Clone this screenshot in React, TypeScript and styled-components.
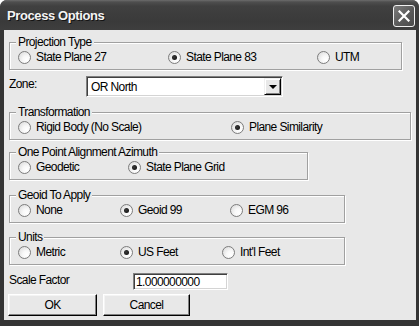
import React from 'react';
import styled, { createGlobalStyle } from 'styled-components';

const Global = createGlobalStyle`
  html, body { margin: 0; padding: 0; background: #ffffff; }
  body { font-family: 'Liberation Sans', Arial, sans-serif; }
  * { box-sizing: border-box; }
`;

const Window = styled.div`
  width: 419px;
  height: 326px;
  display: flex;
  flex-direction: column;
  background: #343434;
  border-radius: 7px 7px 0 0;
  overflow: hidden;
`;

const TitleBar = styled.div`
  height: 30px;
  flex: none;
  display: flex;
  align-items: center;
  justify-content: space-between;
  padding: 1px 4px 0 7px;
  background: linear-gradient(#6c6c6c 0, #4e4e4e 2px, #404040 6px, #3a3a3a 22px, #3e3e3e 100%);
`;

const Title = styled.span`
  color: #f4f4f4;
  font-weight: bold;
  font-size: 13px;
  letter-spacing: -0.4px;
  text-shadow: 1px 1px 0 #141414;
`;

const CloseButton = styled.button`
  width: 22px;
  height: 22px;
  padding: 0;
  border: 1px solid #f0f0f0;
  border-radius: 3px;
  background: linear-gradient(135deg, #7c7c7c, #5a5a5a 55%, #4a4a4a);
  display: flex;
  align-items: center;
  justify-content: center;
`;

const Client = styled.div`
  flex: 1;
  margin: 0 3px 6px 4px;
  background: #e8e8e8;
  padding: 6px 0 0 5px;
  display: flex;
  flex-direction: column;
  align-items: flex-start;
  font-size: 12px;
  letter-spacing: -0.6px;
  color: #000;
`;

const Group = styled.fieldset<{ $w: number; $mt?: number }>`
  width: ${(p) => p.$w}px;
  min-width: 0;
  margin: ${(p) => p.$mt ?? 0}px 0 0 0;
  padding: 0 0 4px 8px;
  border: 1px solid #a0a0a0;
  box-shadow: 1px 1px 0 #ffffff, inset 1px 1px 0 #ffffff;
`;

const Legend = styled.legend`
  padding: 0 2px;
  margin-left: -2px;
  line-height: 13px;
  font-size: 12px;
  background: #e8e8e8;
`;

const Options = styled.div<{ $cols: string }>`
  display: grid;
  grid-template-columns: ${(p) => p.$cols};
  height: 16px;
  align-items: center;
`;

const RadioLabel = styled.label`
  display: flex;
  align-items: center;
  gap: 5px;
  white-space: nowrap;
  line-height: 16px;
`;

const RadioMark = styled.span<{ $checked?: boolean }>`
  width: 13px;
  height: 13px;
  flex: none;
  border-radius: 50%;
  border: 1px solid #7c7c7c;
  background: radial-gradient(circle at 70% 70%, #ffffff 0%, #f8f8f8 35%, #d6d6d6 100%);
  display: flex;
  align-items: center;
  justify-content: center;
  &::after {
    content: '';
    width: 5px;
    height: 5px;
    border-radius: 50%;
    background: ${(p) => (p.$checked ? 'radial-gradient(circle at 40% 40%, #3a3a3a, #0a0a0a)' : 'transparent')};
  }
`;

const FieldRow = styled.div<{ $mt: number }>`
  display: flex;
  align-items: center;
  margin-top: ${(p) => p.$mt}px;
`;

const FieldLabel = styled.span<{ $w: number; $dy?: number }>`
  width: ${(p) => p.$w}px;
  position: relative;
  top: ${(p) => p.$dy ?? 0}px;
`;

const Combo = styled.div`
  width: 197px;
  height: 21px;
  display: flex;
  align-items: center;
  background: #fff;
  border-style: solid;
  border-width: 1px;
  border-color: #808080 #ffffff #ffffff #808080;
  box-shadow: inset 1px 1px 0 #404040, inset -1px -1px 0 #d4d4d4;
  padding: 1px 1px 1px 4px;
`;

const ComboText = styled.span`
  flex: 1;
`;

const DropButton = styled.span`
  width: 17px;
  height: 17px;
  background: #e8e8e8;
  border-style: solid;
  border-width: 1px;
  border-color: #f0f0f0 #000 #000 #f0f0f0;
  box-shadow: inset 1px 1px 0 #fff, inset -1px -1px 0 #808080;
  display: flex;
  align-items: center;
  justify-content: center;
  &::after {
    content: '';
    width: 0;
    height: 0;
    border-left: 4px solid transparent;
    border-right: 4px solid transparent;
    border-top: 4px solid #000;
  }
`;

const TextInput = styled.input`
  width: 95px;
  height: 17px;
  border-style: solid;
  border-width: 1px;
  border-color: #808080 #ffffff #ffffff #808080;
  box-shadow: inset 1px 1px 0 #404040, inset -1px -1px 0 #d4d4d4;
  padding: 0 0 0 2px;
  font: inherit;
  letter-spacing: inherit;
  background: #fff;
  color: #000;
  outline: none;
`;

const ButtonRow = styled.div`
  display: flex;
  gap: 6px;
  margin: 4px 0 0 -1px;
`;

const PushButton = styled.button<{ $w: number }>`
  width: ${(p) => p.$w}px;
  height: 22px;
  padding: 0;
  background: #e8e8e8;
  font: inherit;
  letter-spacing: inherit;
  color: #000;
  border-style: solid;
  border-width: 1px;
  border-color: #fff #000 #000 #fff;
  box-shadow: inset -1px -1px 0 #808080, inset 1px 1px 0 #f4f4f4;
`;

type Opt = { label: string; checked?: boolean };

const Radio = ({ label, checked }: Opt) => (
  <RadioLabel>
    <RadioMark $checked={checked} />
    {label}
  </RadioLabel>
);

const groups: { title: string; w: number; mt: number; cols: string; opts: Opt[] }[] = [
  {
    title: 'Transformation',
    w: 402,
    mt: 9,
    cols: '213px auto',
    opts: [{ label: 'Rigid Body (No Scale)' }, { label: 'Plane Similarity', checked: true }],
  },
  {
    title: 'One Point Alignment Azimuth',
    w: 299,
    mt: 6,
    cols: '110px auto',
    opts: [{ label: 'Geodetic' }, { label: 'State Plane Grid', checked: true }],
  },
  {
    title: 'Geoid To Apply',
    w: 336,
    mt: 9,
    cols: '102px 110px auto',
    opts: [{ label: 'None' }, { label: 'Geoid 99', checked: true }, { label: 'EGM 96' }],
  },
  {
    title: 'Units',
    w: 336,
    mt: 8,
    cols: '102px 102px auto',
    opts: [{ label: 'Metric' }, { label: 'US Feet', checked: true }, { label: "Int'l Feet" }],
  },
];

export default function App() {
  return (
    <>
      <Global />
      <Window>
        <TitleBar>
          <Title>Process Options</Title>
          <CloseButton aria-label="Close">
            <svg width="12" height="12" viewBox="0 0 12 12">
              <path d="M1.5 1.5 L10.5 10.5 M10.5 1.5 L1.5 10.5" stroke="#fff" strokeWidth="2.2" strokeLinecap="square" />
            </svg>
          </CloseButton>
        </TitleBar>
        <Client>
          <Group $w={393}>
            <Legend>Projection Type</Legend>
            <Options $cols="150px 149px auto">
              <Radio label="State Plane 27" />
              <Radio label="State Plane 83" checked />
              <Radio label="UTM" />
            </Options>
          </Group>
          <FieldRow $mt={6}>
            <FieldLabel $w={77} $dy={-3}>Zone:</FieldLabel>
            <Combo>
              <ComboText>OR North</ComboText>
              <DropButton />
            </Combo>
          </FieldRow>
          {groups.map((g) => (
            <Group key={g.title} $w={g.w} $mt={g.mt}>
              <Legend>{g.title}</Legend>
              <Options $cols={g.cols}>
                {g.opts.map((o) => (
                  <Radio key={o.label} label={o.label} checked={o.checked} />
                ))}
              </Options>
            </Group>
          ))}
          <FieldRow $mt={8}>
            <FieldLabel $w={124} $dy={-2}>Scale Factor</FieldLabel>
            <TextInput readOnly value="1.000000000" />
          </FieldRow>
          <ButtonRow>
            <PushButton $w={89}>OK</PushButton>
            <PushButton $w={87}>Cancel</PushButton>
          </ButtonRow>
        </Client>
      </Window>
    </>
  );
}
